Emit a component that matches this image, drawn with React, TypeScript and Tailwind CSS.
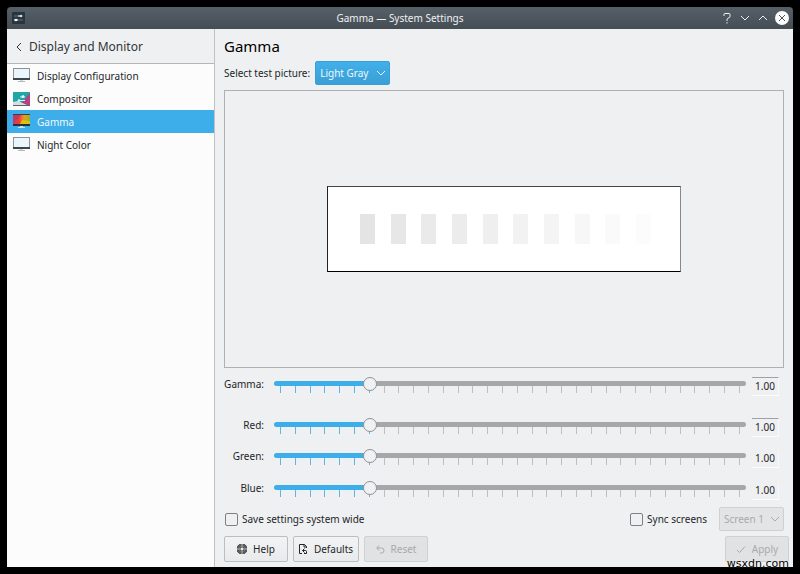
import { useState } from 'react';

const pages = [
  { name: 'Display Configuration', icon: 'monitor' },
  { name: 'Compositor', icon: 'compositor' },
  { name: 'Gamma', icon: 'gamma' },
  { name: 'Night Color', icon: 'monitor' },
];

const channels = [
  { id: 'gamma', label: 'Gamma:', row: 'mb-[21px]', line: 'border-t-[#9fa1a8]' },
  { id: 'red', label: 'Red:', row: 'mb-[11px]', line: 'border-t-[#9fa1a8]' },
  { id: 'green', label: 'Green:', row: 'mb-3', line: 'border-t-transparent' },
  { id: 'blue', label: 'Blue:', row: 'mb-[7px]', line: 'border-t-transparent' },
];

const grays = [
  'bg-[#e4e4e4]',
  'bg-[#e7e7e7]',
  'bg-[#eaeaea]',
  'bg-[#ececec]',
  'bg-[#efefef]',
  'bg-[#f2f2f2]',
  'bg-[#f4f4f4]',
  'bg-[#f7f7f7]',
  'bg-[#fafafa]',
  'bg-[#fcfcfc]',
];

const MIN = 0.4;
const MAX = 3.5;
const ticks = Array.from({ length: 32 }, (_, i) => MIN + i / 10);

const PageIcon = ({ type }: { type: string }) => {
  if (type === 'compositor') {
    return (
      <svg width="17" height="14" viewBox="0 0 17 14" aria-hidden="true">
        <path d="M0 0h17v13H0z" fill="#1fa6a6" />
        <path d="M17 1v12H7z" fill="#b83f83" />
        <path d="M0 10l5-1 9 4H0z" fill="#d9dde0" />
        <path d="M0 13h17v1H0z" fill="#54656d" />
        <path d="M7 5h5M5 8.500h7" stroke="#d8f3f3" strokeWidth="1" />
        <circle cx="10" cy="4.500" r="1.300" fill="#fff" />
        <circle cx="6" cy="8.500" r="1.300" fill="#e7f4f5" />
      </svg>
    );
  }
  if (type === 'gamma') {
    return (
      <svg width="17" height="15" viewBox="0 0 17 15" aria-hidden="true">
        <defs>
          <linearGradient id="hue" x1="0" y1="0" x2="1" y2="0">
            <stop offset="0" stopColor="#d5366d" />
            <stop offset="0.350" stopColor="#ed3d35" />
            <stop offset="0.650" stopColor="#f09a20" />
            <stop offset="1" stopColor="#8fb52c" />
          </linearGradient>
        </defs>
        <path d="M0 0h17v12H0z" fill="#33434b" />
        <path d="M0 1h17v9H0z" fill="url(#hue)" />
        <path d="M0 1h8L5 5 0 8z" fill="#a63b73" opacity="0.600" />
        <path d="M9 6l8 1v3H7z" fill="#d8cb15" opacity="0.800" />
        <path d="M0 10h17v2H0z" fill="#22333c" />
        <path d="M7 12h3v1h2v1H5v-1h2z" fill="#c9e5f4" />
      </svg>
    );
  }
  return (
    <svg width="17" height="15" viewBox="0 0 17 15" aria-hidden="true">
      <path d="M0 0h17v12H0z" fill="#8c9499" />
      <path d="M1 1h15v9H1z" fill="#eaf5fc" />
      <path d="M0 10h17v2H0z" fill="#3c474d" />
      <path d="M7 12h3v1H7z" fill="#d5d8da" />
      <path d="M5 13h7v1H5z" fill="#b4b8bb" />
    </svg>
  );
};

const Chevron = ({ d }: { d: string }) => (
  <svg width="10" height="10" viewBox="0 0 10 10" fill="none" stroke="currentColor" aria-hidden="true">
    <path d={d} />
  </svg>
);

const TitleBar = () => (
  <header className="flex h-[22px] shrink-0 items-center rounded-t-sm bg-linear-to-b from-[#566069] to-[#454d54] px-1 text-[#eff0f1]">
    <div className="flex flex-1">
      <svg width="14" height="14" viewBox="0 0 14 14" aria-hidden="true">
        <rect x="1" y="1" width="13" height="12" rx="1" fill="#29343c" />
        <path d="M3 5h9M3 9h9" stroke="#65747e" />
        <path d="M7 5h4M3 9h4" stroke="#e6f5fb" />
        <circle cx="10" cy="5" r="1.200" fill="#bfe5f6" />
        <circle cx="5" cy="9" r="1.200" fill="#fff" />
      </svg>
    </div>
    <h1>Gamma — System Settings</h1>
    <div className="flex flex-1 items-center justify-end gap-[6px]">
      <button type="button" aria-label="Help" className="flex w-3 justify-center">
        <svg width="8" height="11" viewBox="0 0 8 11" fill="none" stroke="currentColor" aria-hidden="true">
          <path d="M1 3V1.500Q1 .5 2 .5h4q1 0 1 1v2q0 1-1 1.200L4.500 5.500Q4 6 4 7v1M4 9.200v1.300" />
        </svg>
      </button>
      <button type="button" aria-label="Minimize" className="flex w-3 justify-center">
        <Chevron d="M1 3l4 4 4-4" />
      </button>
      <button type="button" aria-label="Maximize" className="flex w-3 justify-center">
        <Chevron d="M1 7l4-4 4 4" />
      </button>
      <button type="button" aria-label="Close">
        <svg width="14" height="14" viewBox="0 0 14 14" aria-hidden="true">
          <circle cx="7" cy="7" r="7" fill="#fcfcfc" />
          <path d="M4 4l6 6M10 4l-6 6" stroke="#4a535a" />
        </svg>
      </button>
    </div>
  </header>
);

const Sidebar = () => (
  <nav className="w-[208px] shrink-0 border-r border-[#bfc1c3] bg-[#fcfcfc]">
    <button
      type="button"
      className="flex h-[35px] w-full items-center gap-[5px] border-b border-[#b4b6b8] bg-[#eff0f1] pt-px pl-[7px] text-[12px] text-[#31363b]"
    >
      <Chevron d="M7 1L3 5l4 4" />
      Display and Monitor
    </button>
    <ul>
      {pages.map((page) => (
        <li key={page.name}>
          <a
            href="#"
            className={
              page.name === 'Gamma'
                ? 'flex h-[23px] items-center gap-[7px] bg-[#3daee9] pl-[6px] text-[#eff8fd]'
                : 'flex h-[23px] items-center gap-[7px] pl-[6px] text-[#232629]'
            }
          >
            <PageIcon type={page.icon} />
            {page.name}
          </a>
        </li>
      ))}
    </ul>
  </nav>
);

const ChannelSlider = ({ channel }: { channel: (typeof channels)[number] }) => {
  const [value, setValue] = useState(1);
  const percent = ((value - MIN) / (MAX - MIN)) * 100;

  return (
    <div className={`flex h-5 items-center ${channel.row}`}>
      <label htmlFor={channel.id} className="w-10 shrink-0 self-start text-right whitespace-nowrap">
        {channel.label}
      </label>
      <div className="ml-[10px] flex-1 pt-[2px]">
        <input
          id={channel.id}
          type="range"
          min={MIN}
          max={MAX}
          step={0.05}
          value={value}
          onChange={(e) => setValue(Number(e.target.value))}
          style={{ backgroundImage: `linear-gradient(to right, #3daee9 ${percent}%, #a6a7a8 ${percent}%)` }}
          className="relative z-10 block h-[5px] w-full appearance-none rounded-full [&::-webkit-slider-thumb]:size-[14px] [&::-webkit-slider-thumb]:appearance-none [&::-webkit-slider-thumb]:rounded-full [&::-webkit-slider-thumb]:border [&::-webkit-slider-thumb]:border-[#8f9192] [&::-webkit-slider-thumb]:bg-[#f0f1f2]"
        />
        <div className="flex justify-between px-[6px]">
          {ticks.map((tick) => (
            <span key={tick} className={tick <= value + 0.001 ? 'h-[7px] w-px bg-[#5cb6e6]' : 'h-[7px] w-px bg-[#bcbec0]'} />
          ))}
        </div>
      </div>
      <output
        htmlFor={channel.id}
        className={`mr-[5px] ml-[6px] flex h-[19px] w-[27px] items-center justify-center border-t border-r border-b border-r-[#f7f8f8] border-b-[#fcfcfc] ${channel.line}`}
      >
        {value.toFixed(2)}
      </output>
    </div>
  );
};

const App = () => {
  const [systemWide, setSystemWide] = useState(false);
  const [sync, setSync] = useState(false);

  const checkbox = 'size-[13px] appearance-none rounded-xs border border-[#7d8083] checked:bg-[#3daee9]';
  const button = 'flex h-[26px] items-center justify-center gap-[6px] rounded-xs border border-[#bcbec0] bg-linear-to-b from-[#f2f3f4] to-[#e9eaeb]';
  const disabled = 'flex h-[26px] w-16 items-center justify-center gap-[6px] rounded-xs border border-[#cfd0d2] bg-[#e1e2e3] text-[#a8aaac]';

  return (
    <div className="relative flex min-h-screen flex-col bg-black p-[7px] font-['Noto_Sans',sans-serif] text-[10px] leading-4 text-[#232629]">
      <TitleBar />
      <div className="flex flex-1 bg-[#eff0f1]">
        <Sidebar />
        <main className="flex min-w-0 flex-1 flex-col px-[9px] pt-[6px] pb-[5px]">
          <h2 className="text-[15px] leading-[22px] text-black">Gamma</h2>
          <div className="mt-1 flex items-center gap-[5px]">
            <label htmlFor="picture">Select test picture:</label>
            <div className="relative text-[#eff8fd]">
              <select
                id="picture"
                defaultValue="Light Gray"
                className="block h-6 w-[75px] appearance-none rounded-xs border border-[#38a0d7] bg-linear-to-b from-[#41b0ea] to-[#3a9fd5] pl-1"
              >
                <option>Light Gray</option>
                <option>Mid Gray</option>
                <option>Dark Gray</option>
              </select>
              <span className="pointer-events-none absolute top-2 right-1">
                <Chevron d="M1 2l4 4 4-4" />
              </span>
            </div>
          </div>
          <div className="mt-[5px] flex flex-1 items-center justify-center border border-[#aeb0b2]">
            <div className="flex w-[354px] justify-between border border-t-[#444] border-r-[#888] border-b-black border-l-[#222] bg-white py-[27px] pr-[29px] pl-8">
              {grays.map((gray) => (
                <span key={gray} className={`h-[30px] w-[15px] ${gray}`} />
              ))}
            </div>
          </div>
          <div className="mt-2">
            {channels.map((channel) => (
              <ChannelSlider key={channel.id} channel={channel} />
            ))}
          </div>
          <div className="flex h-6 items-center gap-3">
            <label className="flex flex-1 items-center gap-1 pl-px">
              <input type="checkbox" className={checkbox} checked={systemWide} onChange={() => setSystemWide(!systemWide)} />
              Save settings system wide
            </label>
            <label className="flex items-center gap-1">
              <input type="checkbox" className={checkbox} checked={sync} onChange={() => setSync(!sync)} />
              Sync screens
            </label>
            <div className="relative text-[#a8aaac]">
              <select
                aria-label="Screen"
                disabled
                className="block h-6 w-[65px] appearance-none rounded-xs border border-[#cfd0d2] bg-[#e3e4e5] pl-1 opacity-100"
              >
                <option>Screen 1</option>
              </select>
              <span className="pointer-events-none absolute top-2 right-1">
                <Chevron d="M1 2l4 4 4-4" />
              </span>
            </div>
          </div>
          <div className="mt-[5px] -mr-[5px] flex gap-[5px]">
            <button type="button" className={`${button} w-16`}>
              <svg width="10" height="10" viewBox="0 0 10 10" fill="none" stroke="currentColor" aria-hidden="true">
                <rect x="1" y="1" width="8" height="8" rx="1.500" />
                <rect x="3" y="3" width="4" height="4" rx="1" />
                <path d="M0 3h3V0M7 0v3h3M10 7H7v3M3 10V7H0" />
              </svg>
              Help
            </button>
            <button type="button" className={`${button} w-[66px]`}>
              <svg width="9" height="10" viewBox="0 0 9 10" fill="none" stroke="currentColor" aria-hidden="true">
                <path d="M3 9.500H.5v-9h5l2 2V4M5 .5v2.500h2.500M5.500 4.500l-2 2 2 2M3.500 6.500h3q1 0 1 1v2H5" />
              </svg>
              Defaults
            </button>
            <button type="button" disabled className={disabled}>
              <svg width="9" height="9" viewBox="0 0 9 9" fill="none" stroke="currentColor" aria-hidden="true">
                <path d="M3 .5l-2.300 2.500L3 5.500M1 3h4.500q2.500 0 2.500 2.500T5.500 8H4" />
              </svg>
              Reset
            </button>
            <button type="button" disabled className={`${disabled} ml-auto`}>
              <svg width="10" height="9" viewBox="0 0 10 9" fill="none" stroke="currentColor" aria-hidden="true">
                <path d="M1 5l2.500 2.500L9 1.500" />
              </svg>
              Apply
            </button>
          </div>
        </main>
      </div>
      <span className="absolute right-[11px] bottom-[3px] font-['DejaVu_Sans',sans-serif] text-[11px] leading-[14px] text-black [text-shadow:0_0_1px_white]">
        wsxdn.com
      </span>
    </div>
  );
};

export default App;
